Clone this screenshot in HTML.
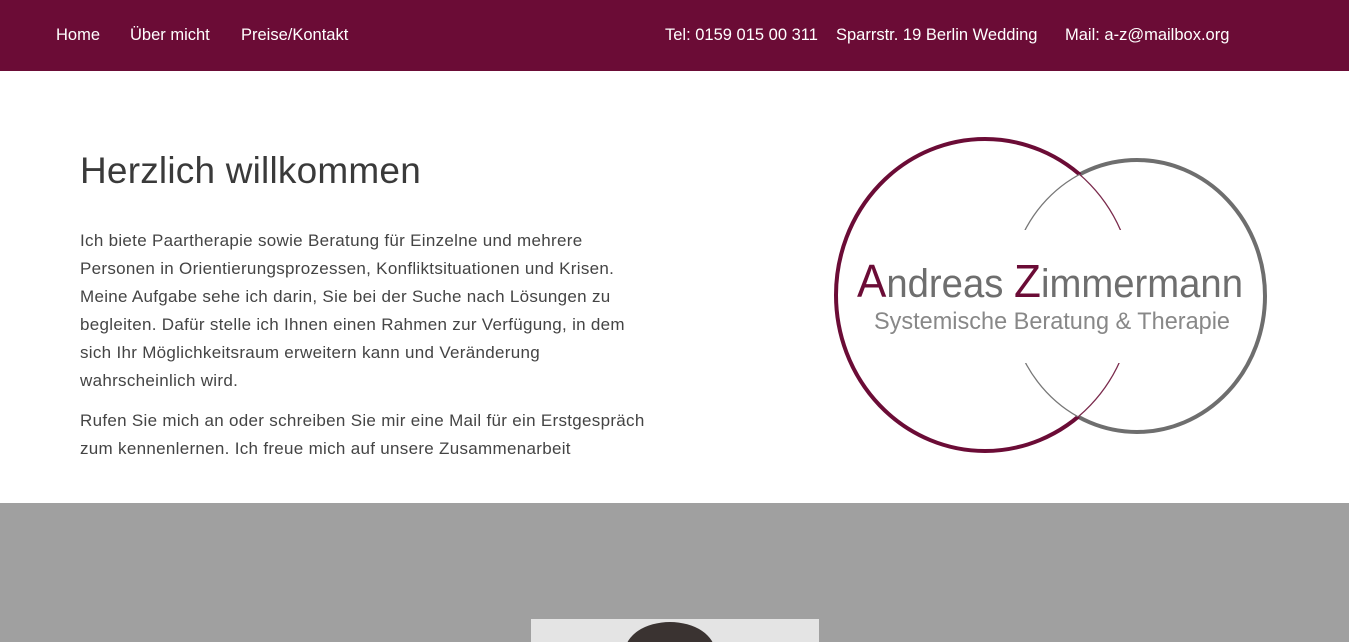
<!DOCTYPE html>
<html><head><meta charset="utf-8"><style>
body{margin:0;width:1349px;height:642px;overflow:hidden;font-family:"Liberation Sans",sans-serif;background:#fff}
.nav{height:71px;background:#6b0c36;color:#fff;font-size:16.5px;position:relative}
.nav span{position:absolute;top:26px;white-space:nowrap}
h1{position:absolute;left:80px;top:150px;margin:0;font-weight:normal;font-size:37px;color:#3a3a3a;letter-spacing:0.2px}
.txt{position:absolute;left:80px;top:227px;font-size:17px;line-height:28px;color:#444;white-space:nowrap;letter-spacing:0.3px}
.txt p{margin:0 0 12px}
.gray{position:absolute;left:0;top:503px;width:1349px;height:139px;background:#a0a0a0}
.photo{position:absolute;left:531px;top:619px;width:288px;height:23px;background:#e4e4e4;overflow:hidden}
.head{position:absolute;left:94px;top:3px;width:90px;height:60px;border-radius:50%;background:#3a3331}
</style></head><body>
<div class="nav">
<span style="left:56px">Home</span><span style="left:130px">Über micht</span><span style="left:241px">Preise/Kontakt</span>
<span style="left:665px">Tel: 0159 015 00 311</span><span style="left:836px">Sparrstr. 19 Berlin Wedding</span><span style="left:1065px">Mail: a-z@mailbox.org</span>
</div>
<h1>Herzlich willkommen</h1>
<div class="txt"><p>Ich biete Paartherapie sowie Beratung für Einzelne und mehrere<br>Personen in Orientierungsprozessen, Konfliktsituationen und Krisen.<br>Meine Aufgabe sehe ich darin, Sie bei der Suche nach Lösungen zu<br>begleiten. Dafür stelle ich Ihnen einen Rahmen zur Verfügung, in dem<br>sich Ihr Möglichkeitsraum erweitern kann und Veränderung<br>wahrscheinlich wird.</p><p>Rufen Sie mich an oder schreiben Sie mir eine Mail für ein Erstgespräch<br>zum kennenlernen. Ich freue mich auf unsere Zusammenarbeit</p></div>
<svg style="position:absolute;left:0;top:0" width="1349" height="503">
<defs>
<mask id="mOut"><rect width="1349" height="503" fill="#fff"/><ellipse cx="1137" cy="296" rx="128" ry="136" fill="#000"/></mask>
<mask id="gOut"><rect width="1349" height="503" fill="#fff"/><ellipse cx="985" cy="295" rx="149" ry="156" fill="#000"/></mask>
<mask id="mIn"><ellipse cx="1137" cy="296" rx="128" ry="136" fill="#fff"/><rect x="1000" y="230" width="145" height="133" fill="#000"/></mask>
<mask id="gIn"><ellipse cx="985" cy="295" rx="149" ry="156" fill="#fff"/><rect x="1000" y="230" width="145" height="133" fill="#000"/></mask>
</defs>
<ellipse cx="1137" cy="296" rx="128" ry="136" fill="none" stroke="#6e6e6e" stroke-width="4" mask="url(#gOut)"/>
<ellipse cx="985" cy="295" rx="149" ry="156" fill="none" stroke="#6b0c36" stroke-width="4" mask="url(#mOut)"/>
<ellipse cx="1137" cy="296" rx="128" ry="136" fill="none" stroke="#777" stroke-width="1.3" mask="url(#gIn)"/>
<ellipse cx="985" cy="295" rx="149" ry="156" fill="none" stroke="#7a2a4c" stroke-width="1.3" mask="url(#mIn)"/>
<text x="857" y="297" font-family="Liberation Sans" font-size="40" fill="#6e6e6e" textLength="386" lengthAdjust="spacingAndGlyphs"><tspan fill="#6b0c36" font-size="46">A</tspan>ndreas <tspan fill="#6b0c36" font-size="46">Z</tspan>immermann</text>
<text x="874" y="329" font-family="Liberation Sans" font-size="24" fill="#888" textLength="356" lengthAdjust="spacingAndGlyphs">Systemische Beratung &amp; Therapie</text>
</svg>
<div class="gray"></div>
<div class="photo"><div class="head"></div></div>
</body></html>
